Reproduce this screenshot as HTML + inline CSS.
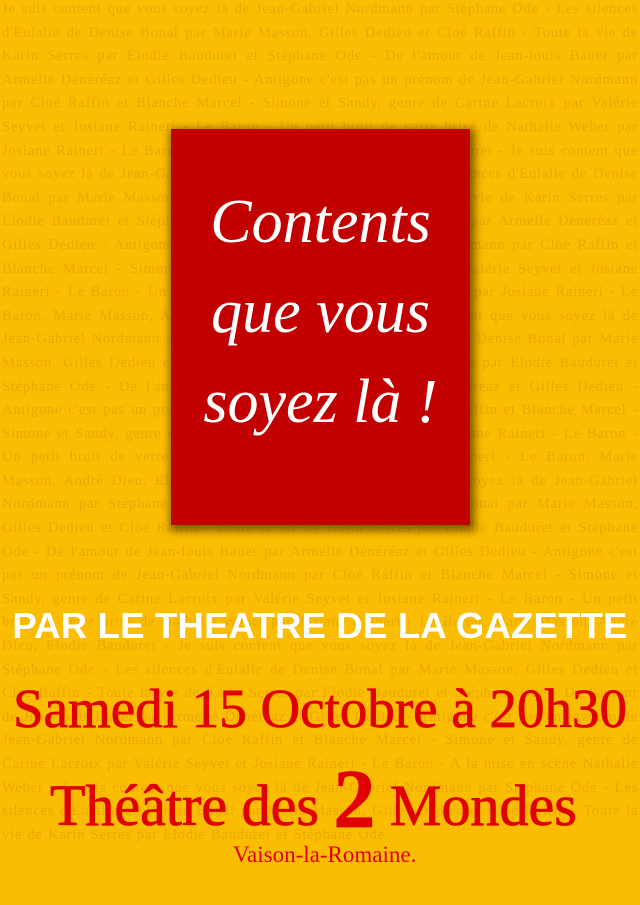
<!DOCTYPE html>
<html><head><meta charset="utf-8"><style>
html,body{margin:0;padding:0;}
body{width:640px;height:905px;overflow:hidden;background:#fbbd02;position:relative;font-family:"Liberation Serif",serif;}
#bg{position:absolute;left:2px;top:-2px;width:636px;height:895px;overflow:hidden;font-size:14.6px;line-height:23.6px;color:#e9a900;text-align:justify;letter-spacing:0.75px;word-spacing:1px;}
#box{position:absolute;left:171px;top:129px;width:299px;height:396px;background:#c20000;box-shadow:2px 3px 8px 3px rgba(90,60,0,0.75);}
.s{position:absolute;left:0;width:100%;text-align:center;color:#fff;font-style:italic;font-size:62px;font-family:"Liberation Serif",serif;}
#t1{position:absolute;left:0;width:640px;top:605px;text-align:center;color:#fff;font-family:"Liberation Sans",sans-serif;font-weight:bold;font-size:36.5px;letter-spacing:0.2px;white-space:nowrap;}
#t2{position:absolute;left:0;width:640px;top:677px;text-align:center;color:#e00000;font-size:55px;white-space:nowrap;-webkit-text-stroke:0.8px #e00000;}
#t3{position:absolute;left:50px;top:751px;color:#e00000;font-size:58px;white-space:nowrap;-webkit-text-stroke:0.8px #e00000;}
#t3 b{font-size:84px;font-weight:bold;vertical-align:-2px;}
#t4{position:absolute;left:233px;top:842px;color:#e00000;font-size:23px;}
</style></head><body>
<div id="bg">Je suis content que vous soyez là de Jean-Gabriel Nordmann par Stéphane Ode - Les silences d'Eulalie de Denise Bonal par Marie Masson, Gilles Dedieu et Cloé Raffin - Toute la vie de Karin Serres par Elodie Bauduret et Stéphane Ode - De l'amour de Jean-louis Bauer par Armelle Dénéréaz et Gilles Dedieu - Antigone c'est pas un prénom de Jean-Gabriel Nordmann par Cloé Raffin et Blanche Marcel - Simone et Sandy, genre de Carine Lacroix par Valérie Seyvet et Josiane Raineri - Le Baron - Un petit bruit de verre brisé de Nathalie Weber par Josiane Raineri - Le Baron, Marie Masson, André Dieu, Elodie Bauduret - Je suis content que vous soyez là de Jean-Gabriel Nordmann par Stéphane Ode - Les silences d'Eulalie de Denise Bonal par Marie Masson, Gilles Dedieu et Cloé Raffin - Toute la vie de Karin Serres par Elodie Bauduret et Stéphane Ode - De l'amour de Jean-louis Bauer par Armelle Dénéréaz et Gilles Dedieu - Antigone c'est pas un prénom de Jean-Gabriel Nordmann par Cloé Raffin et Blanche Marcel - Simone et Sandy, genre de Carine Lacroix par Valérie Seyvet et Josiane Raineri - Le Baron - Un petit bruit de verre brisé de Nathalie Weber par Josiane Raineri - Le Baron, Marie Masson, André Dieu, Elodie Bauduret - Je suis content que vous soyez là de Jean-Gabriel Nordmann par Stéphane Ode - Les silences d'Eulalie de Denise Bonal par Marie Masson, Gilles Dedieu et Cloé Raffin - Toute la vie de Karin Serres par Elodie Bauduret et Stéphane Ode - De l'amour de Jean-louis Bauer par Armelle Dénéréaz et Gilles Dedieu - Antigone c'est pas un prénom de Jean-Gabriel Nordmann par Cloé Raffin et Blanche Marcel - Simone et Sandy, genre de Carine Lacroix par Valérie Seyvet et Josiane Raineri - Le Baron - Un petit bruit de verre brisé de Nathalie Weber par Josiane Raineri - Le Baron, Marie Masson, André Dieu, Elodie Bauduret - Je suis content que vous soyez là de Jean-Gabriel Nordmann par Stéphane Ode - Les silences d'Eulalie de Denise Bonal par Marie Masson, Gilles Dedieu et Cloé Raffin - Toute la vie de Karin Serres par Elodie Bauduret et Stéphane Ode - De l'amour de Jean-louis Bauer par Armelle Dénéréaz et Gilles Dedieu - Antigone c'est pas un prénom de Jean-Gabriel Nordmann par Cloé Raffin et Blanche Marcel - Simone et Sandy, genre de Carine Lacroix par Valérie Seyvet et Josiane Raineri - Le Baron - Un petit bruit de verre brisé de Nathalie Weber par Josiane Raineri - Le Baron, Marie Masson, André Dieu, Elodie Bauduret - Je suis content que vous soyez là de Jean-Gabriel Nordmann par Stéphane Ode - Les silences d'Eulalie de Denise Bonal par Marie Masson, Gilles Dedieu et Cloé Raffin - Toute la vie de Karin Serres par Elodie Bauduret et Stéphane Ode - De l'amour de Jean-louis Bauer par Armelle Dénéréaz et Gilles Dedieu - Antigone c'est pas un prénom de Jean-Gabriel Nordmann par Cloé Raffin et Blanche Marcel - Simone et Sandy, genre de Carine Lacroix par Valérie Seyvet et Josiane Raineri - Le Baron - A la mise en scène Nathalie Weber - Je suis content que vous soyez là de Jean-Gabriel Nordmann par Stéphane Ode - Les silences d'Eulalie de Denise Bonal par Marie Masson, Gilles Dedieu et Cloé Raffin - Toute la vie de Karin Serres par Elodie Bauduret et Stéphane Ode.</div>
<div id="box">
<div class="s" style="top:58px">Contents</div>
<div class="s" style="top:148px">que vous</div>
<div class="s" style="top:238px">soyez là !</div>
</div>
<div id="t1">PAR LE THEATRE DE LA GAZETTE</div>
<div id="t2">Samedi 15 Octobre à 20h30</div>
<div id="t3">Théâtre des <b>2</b> Mondes</div>
<div id="t4">Vaison-la-Romaine.</div>
</body></html>
